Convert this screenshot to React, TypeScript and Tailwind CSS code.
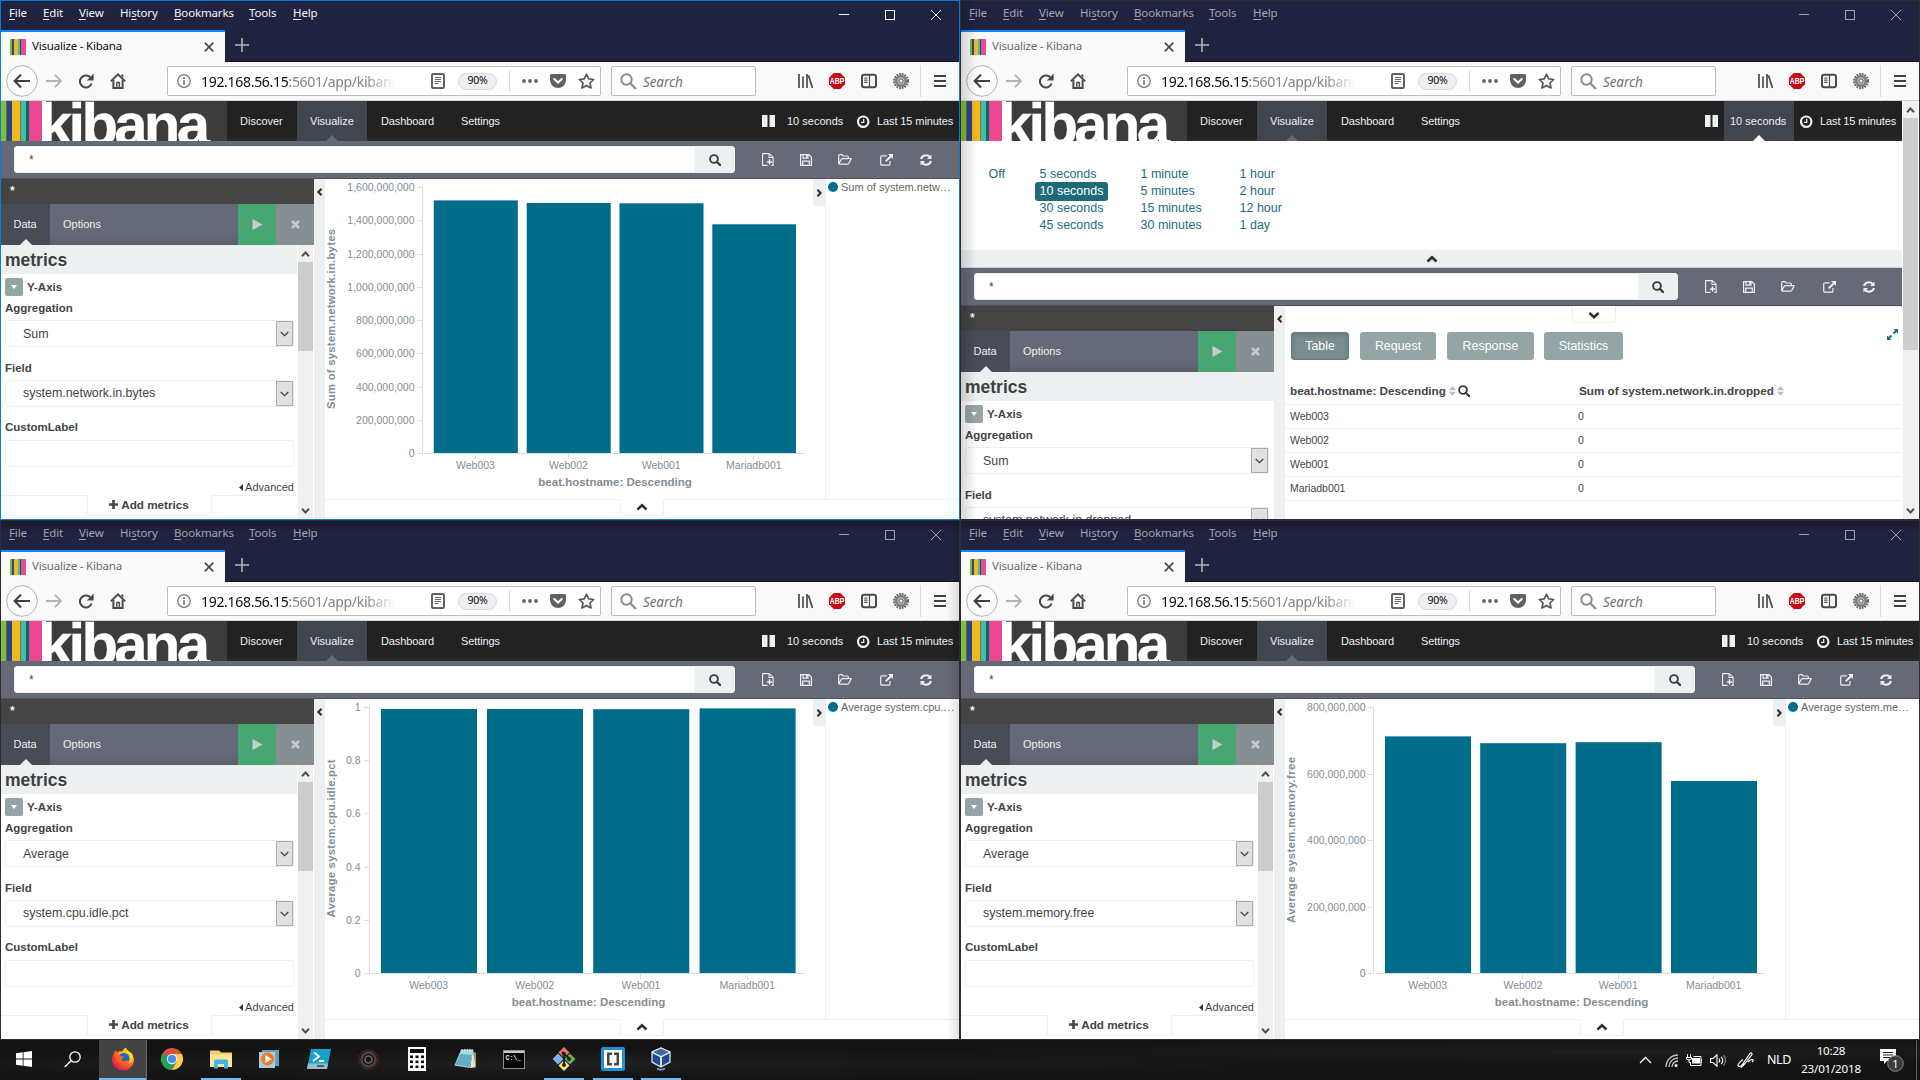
import React from 'react';

const UI = 'font-["Noto_Sans","Open_Sans",sans-serif]';

type ChartData = {
  axisX: number;
  labelRight: number;
  xStart: number;
  ticks: string[];
  yTitle: string;
  yTitleLen: number;
  yTitleMid: number;
  bars: { name: string; x1: number; x2: number; top: number }[];
  titleMid: number;
  legend: string;
};

/* ---------- browser chrome icons ---------- */

const Svg = ({ w, h, vb, children, cls = '' }: { w: number; h: number; vb?: string; children: React.ReactNode; cls?: string }) => (
  <svg width={w} height={h} viewBox={vb ?? `0 0 ${w} ${h}`} className={`block shrink-0 ${cls}`} fill="none">
    {children}
  </svg>
);

const Favicon = () => (
  <Svg w={16} h={16}>
    <rect width="2" height="16" fill="#7fb934" />
    <rect x="2" width="2" height="16" fill="#2b4590" />
    <rect x="4" width="4" height="16" fill="#f3b918" />
    <rect x="8" width="2" height="16" fill="#3ebeb0" />
    <rect x="10" width="1" height="16" fill="#17594f" />
    <rect x="11" width="5" height="16" fill="#ec4891" />
  </Svg>
);

const MenuItem = ({ w, a, u, b }: { w: string; a?: string; u: string; b: string }) => (
  <span className={w}>
    {a}
    <span className="underline underline-offset-2">{u}</span>
    {b}
  </span>
);

const TitleBar = ({ active }: { active: boolean }) => (
  <div className={`flex h-[29px] items-start bg-[#202340] pl-2 ${active ? 'text-[#f4f4f6]' : 'text-[#a2a3ab]'}`}>
    <div className={`flex h-[23px] items-center whitespace-nowrap text-[11.5px] tracking-[-0.15px] ${UI}`}>
      <MenuItem w="w-[34px]" u="F" b="ile" />
      <MenuItem w="w-[36px]" u="E" b="dit" />
      <MenuItem w="w-[41px]" u="V" b="iew" />
      <MenuItem w="w-[54px]" a="Hi" u="s" b="tory" />
      <MenuItem w="w-[75px]" u="B" b="ookmarks" />
      <MenuItem w="w-[44px]" u="T" b="ools" />
      <MenuItem w="w-[40px]" u="H" b="elp" />
    </div>
    <div className="flex-1" />
    <div className="mr-[18px] flex gap-9 pt-[9px]">
      <Svg w={10} h={10}><path d="M0 4.5h10" stroke="currentColor" /></Svg>
      <Svg w={10} h={10}><rect x=".5" y=".5" width="9" height="9" stroke="currentColor" /></Svg>
      <Svg w={10} h={10}><path d="M0 0l10 10M10 0L0 10" stroke="currentColor" /></Svg>
    </div>
  </div>
);

const TabStrip = ({ active }: { active: boolean }) => (
  <div className="flex h-8 bg-[#202340]">
    <div className="flex h-8 w-[224px] items-center border-t-2 border-[#0a84ff] bg-[#f9f9fa] pl-[9px]">
      <Favicon />
      <span className={`ml-1.5 flex-1 pb-0.5 whitespace-nowrap text-[11.5px] tracking-[-0.2px] ${UI} ${active ? 'text-[#0c0c0d]' : 'text-[#6b6b6f]'}`}>
        Visualize - Kibana
      </span>
      <Svg w={10} h={10} cls="mr-[11px]">
        <path d="M.7 .7l8.6 8.6M9.3 .7L.7 9.3" stroke="#4a4a4f" strokeWidth="1.7" />
      </Svg>
    </div>
    <div className="flex-1 border-b border-[#14152c] pt-2 pl-[10px]">
      <Svg w={14} h={14}><path d="M7 0v14M0 7h14" stroke="#b1b2bd" strokeWidth="1.6" /></Svg>
    </div>
  </div>
);

const Toolbar = () => (
  <div className="flex h-[39px] items-center border-b border-[#d5d5d7] bg-[#f9f9fa] pl-[5px]">
    <Svg w={32} h={32}>
      <circle cx="16" cy="16" r="15.3" fill="#fdfdfd" stroke="#b4b4b6" />
      <path d="M24 16H9M15 9.5L8.7 16l6.3 6.5" stroke="#3f3f42" strokeWidth="2.1" />
    </Svg>
    <Svg w={16} h={16} cls="ml-2">
      <path d="M0 8h15M9 1.8L15 8l-6 6.2" stroke="#b3b3b5" strokeWidth="1.9" />
    </Svg>
    <Svg w={16} h={16} cls="ml-4">
      <path d="M12.8 5A6 6 0 1 0 13.6 10.5" stroke="#4a4a4f" strokeWidth="2.1" />
      <path d="M15.6 .6v6.8H8.8z" fill="#4a4a4f" />
    </Svg>
    <Svg w={16} h={16} cls="ml-4">
      <path d="M.8 8.4L8 1.4l7.2 7" stroke="#4a4a4f" strokeWidth="2" />
      <path d="M11.3 1.6h2v3.5l-2-2z" fill="#4a4a4f" />
      <path d="M3.4 7v8h9.2V7" stroke="#4a4a4f" strokeWidth="2" />
      <path d="M6.8 15V9.5h2.6V15" stroke="#4a4a4f" strokeWidth="1.4" />
    </Svg>
    <div className="ml-[41px] flex h-[30px] w-[434px] items-center rounded-[2px] border border-[#bebebf] bg-white pl-[9px]">
      <Svg w={14} h={14}>
        <circle cx="7" cy="7" r="6.3" stroke="#737376" strokeWidth="1.2" />
        <path d="M7 6.2v4.6M7 3.2v1.8" stroke="#737376" strokeWidth="1.7" />
      </Svg>
      <div className={`ml-[10px] w-[196px] overflow-hidden whitespace-nowrap pt-px text-[14px] tracking-[-0.3px] text-[#0c0c0d] [mask-image:linear-gradient(to_right,black_165px,transparent_194px)] ${UI}`}>
        192.168.56.15<span className="text-[#848488]">:5601/app/kibana</span>
      </div>
      <Svg w={14} h={16} cls="ml-[34px]">
        <rect x="1" y="1" width="12" height="14" rx="1" stroke="#626266" strokeWidth="2" />
        <path d="M4 4.5h6M4 6.5h6M4 8.5h6M4 10.5h3.5" stroke="#626266" />
      </Svg>
      <div className={`ml-[13px] flex h-[17px] w-[39px] items-center justify-center rounded-full border border-[#d9d9db] bg-[#efeff1] text-[10.5px] tracking-[-0.3px] text-[#0c0c0d] ${UI}`}>
        90%
      </div>
      <div className="ml-3 h-[22px] w-px bg-[#dcdcdd]" />
      <Svg w={16} h={4} cls="ml-3">
        <circle cx="2" cy="2" r="1.9" fill="#626266" /><circle cx="8" cy="2" r="1.9" fill="#626266" /><circle cx="14" cy="2" r="1.9" fill="#626266" />
      </Svg>
      <Svg w={16} h={16} cls="ml-3">
        <path d="M1.5 1h13A1.5 1.5 0 0 1 16 2.500v4.700a8 7.800 0 0 1-16 0V2.500A1.500 1.500 0 0 1 1.500 1z" fill="#626266" />
        <path d="M4.200 5.900L8 9.500l3.800-3.600" stroke="#fff" strokeWidth="2" strokeLinecap="round" />
      </Svg>
      <Svg w={17} h={16} cls="ml-3">
        <path d="M8.500 1.200l2.200 4.700 5 .6-3.700 3.500 1 5-4.500-2.500L4 15l1-5L1.300 6.500l5-.6z" stroke="#58585c" strokeWidth="1.700" strokeLinejoin="round" />
      </Svg>
    </div>
    <div className="ml-[10px] flex h-[30px] w-[145px] items-center rounded-[2px] border border-[#bebebf] bg-white pl-2">
      <Svg w={17} h={17}>
        <circle cx="6.500" cy="6.500" r="5.200" stroke="#8d8d90" strokeWidth="2" />
        <path d="M10.500 10.500l5.500 5.500" stroke="#8d8d90" strokeWidth="2.200" />
      </Svg>
      <span className={`ml-[6px] pt-0.5 text-[13.5px] italic tracking-[-0.1px] text-[#707073] ${UI}`}>Search</span>
    </div>
    <Svg w={16} h={16} cls="ml-[41px]">
      <path d="M2 1v14M6 3.500v11.500M10 1v14M11.500 2.500L15.500 15" stroke="#4a4a4f" strokeWidth="1.700" />
    </Svg>
    <Svg w={16} h={16} cls="ml-4">
      <path d="M4.700 0h6.600L16 4.700v6.600L11.300 16H4.700L0 11.300V4.700z" fill="#c70d12" />
      <text x="8" y="11" textAnchor="middle" textLength="14.500" lengthAdjust="spacingAndGlyphs" fontSize="8.300" fontWeight="700" fill="#fff" fontFamily="Liberation Sans, sans-serif">ABP</text>
    </Svg>
    <Svg w={16} h={16} cls="ml-4">
      <rect x="1" y="1.800" width="14" height="12.400" rx="2" stroke="#4a4a4f" strokeWidth="2" />
      <path d="M8.500 2v12M3.200 5h3.300M3.200 7.200h3.300M3.200 9.400h3.300" stroke="#4a4a4f" strokeWidth="1.200" />
    </Svg>
    <Svg w={16} h={16} cls="ml-4">
      <circle cx="8" cy="8" r="7" stroke="#5f5f5f" strokeWidth="2" strokeDasharray="1.700 1.100" />
      <circle cx="8" cy="8" r="6.300" fill="#858585" />
      <circle cx="8" cy="8" r="4.300" fill="#b9b9b9" stroke="#6a6a6a" strokeWidth=".9" />
      <circle cx="8" cy="8" r="2" fill="#ececec" stroke="#5a5a5a" strokeWidth=".9" />
    </Svg>
    <div className="ml-[11px] h-8 w-px bg-[#dcdcdd]" />
    <Svg w={12} h={12} cls="ml-[13px]">
      <path d="M0 1h12M0 6h12M0 11h12" stroke="#3f3f42" strokeWidth="2" />
    </Svg>
  </div>
);

/* ---------- kibana parts ---------- */

const Caret = ({ dir, cls = '', small = false }: { dir: 'up' | 'down' | 'left' | 'right'; cls?: string; small?: boolean }) => {
  const d = { up: 'M1.500 7.500L6 3.300 10.500 7.500', down: 'M1.500 3L6 7.200 10.500 3', left: 'M8 1L4 5l4 4', right: 'M4 1l4 4-4 4' }[dir];
  return <Svg w={small ? 10 : 12} h={small ? 8 : 10} vb="0 0 12 10" cls={cls}><path d={d} stroke="#2e3033" strokeWidth="2.600" /></Svg>;
};

const ScrollArrow = ({ up = false }: { up?: boolean }) => (
  <Svg w={9} h={6}>
    <path d={up ? 'M1 5.200l3.500-3.700L8 5.200' : 'M1 .8l3.500 3.700L8 .8'} stroke="#505050" strokeWidth="2" />
  </Svg>
);

const ScrollBar = ({ thumb }: { thumb: string }) => (
  <div className="flex w-[17px] shrink-0 flex-col items-center border-x border-white bg-[#f0f0f0]">
    <div className="flex h-[17px] shrink-0 items-center"><ScrollArrow up /></div>
    <div className={`w-full shrink-0 bg-[#cdcdcd] ${thumb}`} />
    <div className="flex-1" />
    <div className="flex h-4 items-center"><ScrollArrow /></div>
  </div>
);

const Logo = () => (
  <div className="flex h-10 w-[226px] overflow-hidden bg-[#3c3c3c]">
    <svg width="226" height="40" viewBox="0 0 226 40" className="block">
      <rect width="5" height="40" fill="#83bd3c" />
      <rect x="5" width="1" height="40" fill="#55762f" />
      <rect x="6" width="5" height="40" fill="#2b4590" />
      <rect x="11" width="8" height="40" fill="#f3b918" />
      <rect x="19" width="1" height="40" fill="#8a7a3a" />
      <rect x="20" width="5" height="40" fill="#3ebeb0" />
      <rect x="25" width="3" height="40" fill="#12645a" />
      <rect x="28" width="13" height="40" fill="#ec4891" />
      <rect x="41" width="4" height="40" fill="#fff" />
      <text x="38" y="43.500" fontSize="60" fontWeight="700" fill="#fff" fontFamily="Liberation Sans, Arial, sans-serif" textLength="171" lengthAdjust="spacing" stroke="#fff" strokeWidth=".3">kibana</text>
    </svg>
  </div>
);

const Pointer = ({ cls }: { cls: string }) => (
  <svg width="12" height="6" viewBox="0 0 12 6" className={`absolute bottom-0 left-1/2 -ml-1.5 ${cls}`}><path d="M0 6l6-6 6 6z" fill="currentColor" /></svg>
);

const KibanaNav = ({ open }: { open: boolean }) => (
  <div className="flex h-10 items-center bg-[#222222] bg-linear-to-b from-[#222] from-80% to-[#292929] text-[11px] text-[#ecf0f1]">
    <Logo />
    <span className="w-[70px] pl-[13px]">Discover</span>
    <span className="relative flex h-10 w-[70px] items-center bg-[#41454e] pl-[13px]">
      Visualize
      <Pointer cls="text-[#656a76]" />
    </span>
    <span className="w-[80px] pl-[14px] tracking-[-0.1px]">Dashboard</span>
    <span className="pl-[14px] tracking-[-0.1px]">Settings</span>
    <div className="flex-1" />
    <Svg w={13} h={12} cls="mr-1.5"><path d="M0 0h5.500v12H0zM7.500 0H13v12H7.500z" fill="#ecf0f1" /></Svg>
    <span className={`relative flex h-10 w-[70px] items-center pl-[6px] whitespace-nowrap ${open ? 'bg-[#41454e]' : ''}`}>
      10 seconds
      {open && <Pointer cls="text-white" />}
    </span>
    <Svg w={13} h={13} cls="mr-[7px] ml-[6px]">
      <circle cx="6.200" cy="6.700" r="5.200" stroke="#ecf0f1" strokeWidth="2.200" />
      <path d="M6.700 3.700v3.700H4" stroke="#ecf0f1" strokeWidth="1.300" />
    </Svg>
    <span className="w-[82px] whitespace-nowrap tracking-[-0.1px]">Last 15 minutes</span>
  </div>
);

const Magnifier = ({ s = 12 }: { s?: number }) => (
  <Svg w={s} h={s} vb="0 0 12 12">
    <circle cx="5" cy="5" r="3.900" stroke="#3b3e42" strokeWidth="1.900" />
    <path d="M7.800 7.800l3.300 3.300" stroke="#3b3e42" strokeWidth="2.200" strokeLinecap="round" />
  </Svg>
);

const SearchRow = () => (
  <div className="flex h-[38px] items-center border-b border-[#50505f] bg-[#656a76] pl-[13px] text-[#ecf0f1]">
    <div className="mb-px flex h-[27px] flex-1 overflow-hidden rounded-[3px] border border-[#eef1f2] bg-white">
      <span className="flex-1 pt-1 pl-[14px] text-[12px] leading-[18px] text-[#444]">*</span>
      <div className="flex w-[39px] items-center justify-center bg-[#ecf0f1] pt-px pl-px"><Magnifier /></div>
    </div>
    <div className="flex w-[224px] items-center pl-[27px]">
      <Svg w={12} h={13}>
        <path d="M5.500 12.400H.6V.6h6.500l4 3.600v8.200H9.500M7 .8v3.700h4" stroke="currentColor" strokeWidth="1.100" />
        <path d="M7.500 6.300v5.200M4.900 8.900h5.200" stroke="currentColor" strokeWidth="1.500" />
      </Svg>
      <Svg w={12} h={12} cls="ml-[25.500px]">
        <path d="M.6 .6h8.200l2.600 2.600v8.200H.6zM3 .8v3.400h5V.8M2.700 11.300V7.200h6.600v4.100" stroke="currentColor" strokeWidth="1.200" />
        <path d="M6 1h1.500v2.500H6z" fill="currentColor" />
      </Svg>
      <Svg w={14} h={11} cls="ml-[26.500px]">
        <path d="M.7 9.400V1.600q0-1 1-1h2.400l1 1.400h4.200q1 0 1 1v1.500M.8 9.600l2.500-4.300q.4-.7 1.300-.7h8.600l-2.400 4.600q-.5.900-1.400.9H1z" stroke="currentColor" strokeWidth="1.200" strokeLinejoin="round" />
      </Svg>
      <Svg w={13} h={12} cls="ml-[27.500px]">
        <path d="M6.700 1.800H2q-1.300 0-1.300 1.300v6.700Q.7 11.200 2 11.200h6.700q1.300 0 1.300-1.300V7" stroke="currentColor" strokeWidth="1.200" />
        <path d="M8 0h5v5l-1.700-1.700-5 4.700-1.300-1.300 4.800-5z" fill="currentColor" />
      </Svg>
      <Svg w={12} h={12} cls="ml-[27.500px]">
        <path d="M1 5A5 4.800 0 0 1 9.700 3M11 7A5 4.800 0 0 1 2.300 9" stroke="currentColor" strokeWidth="2.100" />
        <path d="M11.500 .6v4.500H7zM.5 11.400V6.900H5z" fill="currentColor" />
      </Svg>
    </div>
  </div>
);

const Select = ({ value, nudge = '' }: { value: string; nudge?: string }) => (
  <div className="flex h-[27px] items-center rounded-[3px] border border-[#ecf0f1] pl-[17px] text-[12.4px] text-[#444]">
    <span className={`flex-1 whitespace-nowrap ${nudge}`}>{value}</span>
    <div className="flex h-[25px] w-[17px] items-center justify-center border border-[#adadad] bg-[#e1e1e1]">
      <Svg w={9} h={6}><path d="M.7 1l3.800 3.700L8.300 1" stroke="#404040" strokeWidth="1.200" /></Svg>
    </div>
  </div>
);

const Label = ({ nudge = 'pt-0.5', children }: { nudge?: string; children: React.ReactNode }) => (
  <div className={`flex h-6 items-center text-[11.5px] font-bold text-[#444] ${nudge}`}>{children}</div>
);

const Sidebar = ({ agg, field, scroll }: { agg: string; field: string; scroll: boolean }) => (
  <div className="flex w-[313px] shrink-0 flex-col">
    <div className="h-[25px] shrink-0 bg-[#444444] pt-0.5 pl-[9px] text-[12px] font-bold leading-[20px] text-[#ecf0f1]">*</div>
    <div className="flex h-[41px] shrink-0 items-stretch bg-[#666a78] bg-linear-to-b from-[#666a78] from-70% to-[#5b5e6a] text-[11px] text-[#ecf0f1]">
      <div className="relative flex w-[49px] items-center bg-[#484c56] pb-px pl-[12.500px]">
        Data
        <Pointer cls="text-[#ecf0f1]" />
      </div>
      <div className="flex flex-1 items-center pb-px pl-[13px]">Options</div>
      <div className="flex w-[38px] items-center justify-center bg-[#46a571] pl-px">
        <Svg w={11} h={11}><path d="M.5 0l10 5.500-10 5.500z" fill="#c5cfcd" /></Svg>
      </div>
      <div className="flex w-[38px] items-center justify-center bg-[#858e93] pl-px">
        <Svg w={9} h={9}><path d="M1 1l7 7M8 1L1 8" stroke="#c3c8cb" strokeWidth="2.800" /></Svg>
      </div>
    </div>
    <div className="flex min-h-0 flex-1 overflow-hidden">
      <div className="flex flex-1 flex-col">
        <div className="flex h-[29px] shrink-0 items-center bg-[#ecf0f1] pt-0.5 pl-1 text-[17.5px] font-bold text-[#3f3f3f]">metrics</div>
        <div className={`flex flex-1 shrink-0 flex-col pt-1 pl-1 ${scroll ? 'pr-[3px]' : 'pr-[5px]'}`}>
          <div className="flex h-[18px] shrink-0 items-center text-[11.5px] font-bold text-[#444]">
            <div className="mr-1 flex size-[18px] items-center justify-center rounded-[2px] bg-[#95a5a6]">
              <Svg w={6} h={4}><path d="M0 0h6L3 4z" fill="#fff" /></Svg>
            </div>
            <span className="pt-px">Y-Axis</span>
          </div>
          <Label>Aggregation</Label>
          <Select value={agg} nudge="pt-px" />
          <div className="mt-[9px]"><Label>Field</Label></div>
          <Select value={field} />
          {scroll && (
            <>
              <div className="mt-[9px]"><Label nudge="">CustomLabel</Label></div>
              <div className="h-[27px] rounded-[3px] border border-[#ecf0f1]" />
              <div className="mt-3 flex h-4 items-center justify-end gap-0.5 text-[11px] text-[#444]">
                <Svg w={4} h={7}><path d="M4 0v7L0 3.500z" fill="#333" /></Svg>
                Advanced
              </div>
            </>
          )}
        </div>
        {scroll && (
          <div className="flex h-6 shrink-0">
            <div className="w-[86px] border-t border-[#ecf0f1]" />
            <div className="mb-[3px] flex w-[125px] items-center justify-center gap-[3px] rounded-b-[3px] border border-t-0 border-[#ecf0f1] pr-px pb-px text-[11.7px] font-bold whitespace-nowrap text-[#444]">
              <Svg w={9} h={9}><path d="M4.500 0v9M0 4.500h9" stroke="#444" strokeWidth="2.600" /></Svg>
              Add metrics
            </div>
            <div className="flex-1 border-t border-[#ecf0f1]" />
          </div>
        )}
      </div>
      {scroll && <ScrollBar thumb="h-[89px]" />}
    </div>
  </div>
);

const Gutter = () => (
  <div className="flex w-[11px] shrink-0 justify-center bg-[#ecf0f1] pt-[9px]"><Caret dir="left" small /></div>
);

const Chart = ({ c }: { c: ChartData }) => {
  const y0 = 453.5;
  const yTop = 187.5;
  const step = (y0 - yTop) / (c.ticks.length - 1);
  return (
    <svg width="488" height="320" viewBox="325 179 488 320" className="block shrink-0" fontFamily="Liberation Sans, Arial, sans-serif">
      <g stroke="#dddddd" fill="none">
        <path d={`M${c.axisX} ${yTop}V${y0}`} />
        <path d={`M${c.xStart} ${y0}H805`} />
        {c.ticks.map((t, i) => <path key={t} d={`M${c.axisX - 5.5} ${Math.floor(y0 - i * step) + 0.5}h6`} />)}
      </g>
      <g fill="#848e96" fontSize="10.5">
        {c.ticks.map((t, i) => <text key={t} x={c.labelRight} y={y0 + 3.5 - i * step} textAnchor="end">{t}</text>)}
        {c.bars.map((b) => (
          <g key={b.name}>
            <path d={`M${Math.floor((b.x1 + b.x2) / 2 - 0.5) + 0.5} ${y0}v5.500`} stroke="#dddddd" />
            <text x={(b.x1 + b.x2) / 2 - 0.3} y="469" textAnchor="middle">{b.name}</text>
          </g>
        ))}
      </g>
      {c.bars.map((b) => <rect key={b.name} x={b.x1} y={b.top} width={b.x2 - b.x1} height={y0 - 0.5 - b.top} fill="#006e8a" />)}
      <g fill="#848e96" fontWeight="700" fontSize="11.5">
        <text x={c.titleMid} y="486" textAnchor="middle">beat.hostname: Descending</text>
        <text transform={`translate(335 ${c.yTitleMid}) rotate(-90)`} textAnchor="middle" fontSize="11.300" textLength={c.yTitleLen}>{c.yTitle}</text>
      </g>
    </svg>
  );
};

const ChartPane = ({ c }: { c: ChartData }) => (
  <div className="flex flex-1 flex-col bg-white">
    <div className="flex h-80">
      <Chart c={c} />
      <div className="flex h-[27px] w-3 items-center justify-center rounded-bl-[3px] bg-[#ecf0f1] pr-px"><Caret dir="right" small /></div>
      <div className="flex flex-1 items-start border-l border-[#ecf0f1] pt-[1px] pl-[2px] text-[11px] whitespace-nowrap text-[#666]">
        <Svg w={10} h={10} cls="mt-[2px] mr-[3px]"><circle cx="5" cy="5" r="5" fill="#006e8a" /></Svg>
        <span className="leading-[15px]">{c.legend}<span className="tracking-[0.7px]">...</span></span>
      </div>
    </div>
    <div className="flex h-5">
      <div className="w-[295px] border-t border-[#ecf0f1]" />
      <div className="flex h-[17px] w-11 items-center justify-center rounded-b-[3px] border border-t-0 border-[#ecf0f1]"><Caret dir="up" /></div>
      <div className="flex-1 border-t border-[#ecf0f1]" />
    </div>
  </div>
);

const Sort = () => (
  <Svg w={7} h={10} cls="ml-[3px]"><path d="M0 4.300L3.500 .3 7 4.300zM0 5.700h7L3.500 9.700z" fill="#b7bdc1" /></Svg>
);

const TablePane = () => (
  <div className="flex flex-1 flex-col overflow-hidden bg-white">
    <div className="flex h-[17px] shrink-0">
      <div className="flex-1 border-t border-[#ecf0f1]" />
      <div className="flex w-11 items-center justify-center rounded-b-[3px] border border-t-0 border-[#ecf0f1] pt-px"><Caret dir="down" /></div>
      <div className="flex-1 border-t border-[#ecf0f1]" />
    </div>
    <div className="flex h-[63px] shrink-0 items-start pt-[9px] pl-1.5 text-[12.400px] text-white">
      <div className="flex h-7 w-[58px] items-center justify-center rounded-[3px] border border-[#6b7d7d] bg-[#798d8f] shadow-[inset_0_2px_4px_rgba(0,0,0,0.18)]">Table</div>
      <div className="ml-[11px] flex h-7 w-[76px] items-center justify-center rounded-[3px] bg-[#95a5a6]">Request</div>
      <div className="ml-[11px] flex h-7 w-[87px] items-center justify-center rounded-[3px] bg-[#95a5a6]">Response</div>
      <div className="ml-[10px] flex h-7 w-[79px] items-center justify-center rounded-[3px] bg-[#95a5a6]">Statistics</div>
      <div className="flex-1" />
      <Svg w={11} h={11} cls="mt-[-3px] mr-1">
        <path d="M6.500 0H11v4.500L9.500 3 7.300 5.200 5.800 3.700 8 1.500zM4.500 11H0V6.500L1.500 8l2.200-2.200 1.500 1.500L3 9.500z" fill="#1d6d82" />
      </Svg>
    </div>
    <div className="flex h-[19px] shrink-0 items-start border-b border-[#ecf0f1] pl-[5px] text-[11.700px] leading-[8px] font-bold whitespace-nowrap text-[#444]">
      <div className="flex h-[9px] w-[289px] items-center">beat.hostname: Descending<Sort /><span className="ml-0.5"><Magnifier /></span></div>
      <div className="flex h-[9px] items-center">Sum of system.network.in.dropped<Sort /></div>
    </div>
    {['Web003', 'Web002', 'Web001', 'Mariadb001'].map((h) => (
      <div key={h} className="flex h-6 shrink-0 items-center border-b border-[#ecf0f1] pt-px pl-[5px] text-[10.500px] text-[#444]">
        <span className="w-[288px]">{h}</span>
        <span>0</span>
      </div>
    ))}
  </div>
);

const intervals: { w: string; items: string[] }[] = [
  { w: 'w-[51px]', items: ['Off'] },
  { w: 'w-[101px]', items: ['5 seconds', '10 seconds', '30 seconds', '45 seconds'] },
  { w: 'w-[99px]', items: ['1 minute', '5 minutes', '15 minutes', '30 minutes'] },
  { w: 'w-[90px]', items: ['1 hour', '2 hour', '12 hour', '1 day'] },
];

const IntervalPicker = () => (
  <div className="flex shrink-0 flex-col bg-white">
    <div className="flex h-[109px] pt-[25px] pl-[23px] text-[12.500px] text-[#1d6d82]">
      {intervals.map((col) => (
        <div key={col.w} className={`flex flex-col items-start ${col.w}`}>
          {col.items.map((t) => (
            <span
              key={t}
              className={`-mt-px mb-[-1.200px] flex h-[19px] items-center rounded-[3px] px-[4.500px] whitespace-nowrap ${t === '10 seconds' ? 'bg-[#1f6b7a] text-white' : ''}`}
            >
              {t}
            </span>
          ))}
        </div>
      ))}
    </div>
    <div className="flex h-[18px] items-center justify-center border-b border-[#cfd4d6] bg-[#ecf0f1]"><Caret dir="up" /></div>
  </div>
);

/* ---------- windows ---------- */

type WinProps = { active?: boolean; agg: string; field: string; chart?: ChartData; shade?: React.ReactNode };

const BrowserWindow = ({ active = false, agg, field, chart, shade }: WinProps) => (
  <div className={`relative flex h-[520px] w-[960px] flex-col overflow-hidden border bg-white ${active ? 'border-[#0f7bd6]' : 'border-[#2d2d30]'}`}>
    <TitleBar active={active} />
    <TabStrip active={active} />
    <Toolbar />
    <div className="flex min-h-0 flex-1">
      <div className="flex min-w-0 flex-1 flex-col overflow-hidden">
        <KibanaNav open={!chart} />
        {!chart && <IntervalPicker />}
        <SearchRow />
        <div className="flex min-h-0 flex-1">
          <Sidebar agg={agg} field={field} scroll={!!chart} />
          <Gutter />
          {chart ? <ChartPane c={chart} /> : <TablePane />}
        </div>
      </div>
      {!chart && <ScrollBar thumb="h-[232px]" />}
    </div>
    {shade}
  </div>
);

const names = ['Web003', 'Web002', 'Web001', 'Mariadb001'];
const mk = (v: number[][]) => v.map(([x1, x2, top], i) => ({ name: names[i], x1, x2, top }));

const networkChart: ChartData = {
  axisX: 422.5, labelRight: 414.5, xStart: 425,
  ticks: ['0', '200,000,000', '400,000,000', '600,000,000', '800,000,000', '1,000,000,000', '1,200,000,000', '1,400,000,000', '1,600,000,000'],
  yTitle: 'Sum of system.network.in.bytes', yTitleLen: 180, yTitleMid: 319,
  bars: mk([[433.8, 517.8, 200.4], [526.7, 610.7, 203], [619.5, 703.5, 203.3], [712.3, 796, 224.3]]),
  titleMid: 615, legend: 'Sum of system.netw',
};
const cpuChart: ChartData = {
  axisX: 369.5, labelRight: 360.5, xStart: 371,
  ticks: ['0', '0.2', '0.4', '0.6', '0.8', '1'],
  yTitle: 'Average system.cpu.idle.pct', yTitleLen: 158, yTitleMid: 318.5,
  bars: mk([[381, 477, 189], [487, 583, 189], [593.2, 689.3, 189.2], [699.6, 795.6, 188.4]]),
  titleMid: 588.5, legend: 'Average system.cpu.',
};
const memoryChart: ChartData = {
  axisX: 413.5, labelRight: 405.5, xStart: 416,
  ticks: ['0', '200,000,000', '400,000,000', '600,000,000', '800,000,000'],
  yTitle: 'Average system.memory.free', yTitleLen: 166, yTitleMid: 320,
  bars: mk([[425, 511, 216.4], [520.2, 606.2, 223.2], [615.6, 701.6, 222.2], [711, 797, 261]]),
  titleMid: 611.5, legend: 'Average system.me',
};

/* ---------- taskbar ---------- */

const Task = ({ w, bar, on, children }: { w: string; bar?: string; on?: boolean; children: React.ReactNode }) => (
  <div className={`flex h-10 flex-col items-center ${w} ${on ? 'border-r border-[#6a6a6a] bg-[#434343]' : ''}`}>
    <div className="flex flex-1 items-center">{children}</div>
    <div className={`h-0.5 ${bar ?? ''}`} />
  </div>
);

const Taskbar = () => (
  <div className="flex h-10 w-full items-center overflow-hidden bg-[#131313] bg-[radial-gradient(ellipse_at_30%_60%,#202020_0%,transparent_40%),radial-gradient(ellipse_at_85%_30%,#1e1e1e_0%,transparent_30%)]">
    <Task w="w-[48px]">
      <Svg w={16} h={16}><path d="M0 2.300L6.700 1.300v6.200H0zM7.500 1.200L16 0v7.500H7.500zM0 8.400h6.700v6.300L0 13.700zM7.500 8.400H16V16l-8.500-1.200z" fill="#fff" /></Svg>
    </Task>
    <Task w="w-[51px]">
      <Svg w={17} h={17} cls="mr-[3px]"><circle cx="11" cy="6" r="5.200" stroke="#fff" strokeWidth="1.300" /><path d="M7.200 9.800L.7 16" stroke="#fff" strokeWidth="1.400" /></Svg>
    </Task>
    <Task w="w-[48px]" on bar="bg-[#76b9ed] w-[47px]">
      <Svg w={24} h={24}>
        <defs>
          <radialGradient id="ffx" cx=".75" cy=".2" r=".9"><stop offset="0" stopColor="#ffe226" /><stop offset=".45" stopColor="#ff9a1e" /><stop offset=".75" stopColor="#f4402f" /><stop offset="1" stopColor="#d9156c" /></radialGradient>
        </defs>
        <path d="M3 6l1.500-3L6 5.500C8 4 10 4 11 4.500 12 2 14 1 15 .5c0 2 1 3 3.500 4.500C21 7 23 10 23 13c0 6-5 10.500-11 10.500S1 19 1 13c0-3 .8-5 2-7z" fill="url(#ffx)" />
        <circle cx="13" cy="11.500" r="5.500" fill="#1f66c9" />
        <path d="M5 9c2-1.500 4-1 5 0l3 .5c0 1.500-2 2-2.500 2.500 0 2 2.500 3 5 1.500 1.500-.5 2.500 0 2.500.8-2 3.700-8 4.200-11 .7C5.500 13 5 11 5 9z" fill="#f8671f" />
        <path d="M15 1c-1 3 3 4.500 3.500 9 1.500 2 .5 5-1 7 3.500-1.500 5-4.500 4.500-8.500C21 5 16 4 15 1z" fill="#ffd521" />
      </Svg>
    </Task>
    <Task w="w-[50px]">
      <Svg w={22} h={22}>
        <circle cx="11" cy="11" r="11" fill="#dd4f43" />
        <path d="M11 11L1.400 5.600A11 11 0 0 0 10.500 22l5-8.500z" fill="#1da362" />
        <path d="M11 22a11 11 0 0 0 9.700-16H11l4.700 8z" fill="#ffcd46" />
        <circle cx="11" cy="11" r="5.200" fill="#f1f1f1" /><circle cx="11" cy="11" r="4.100" fill="#4a8af4" />
      </Svg>
    </Task>
    <Task w="w-[48px]" bar="bg-[#76b9ed] w-10">
      <Svg w={22} h={20}>
        <path d="M0 1.500h9l2 2h11V18H0z" fill="#f5cf63" /><path d="M0 5.500h22V18H0z" fill="#ffe499" />
        <path d="M4 19.500V12q0-1.500 1.500-1.500h11q1.500 0 1.500 1.500v7.500h-4V15H8v4.500z" fill="#3eb4e8" />
      </Svg>
    </Task>
    <Task w="w-[48px]">
      <Svg w={20} h={20}>
        <rect x="3" y="1" width="17" height="16" fill="#6a9dbd" /><rect x="0" y="3" width="16" height="16" fill="#a8cde2" />
        <circle cx="8.500" cy="10" r="6.500" fill="#f27a24" /><path d="M6.300 6v8l6.500-4z" fill="#fff" />
      </Svg>
    </Task>
    <Task w="w-[51px]">
      <Svg w={24} h={20}>
        <path d="M4 0h20l-4 20H0z" fill="#17a2cd" /><path d="M1 14.500h20.100L20 20H0z" fill="#9bbac6" />
        <path d="M7 3.500l5 4-6 4.500M12 12h5" stroke="#fff" strokeWidth="1.800" /><path d="M10 17h7" stroke="#304a55" strokeWidth="1.500" />
      </Svg>
    </Task>
    <Task w="w-[48px]">
      <Svg w={21} h={21}>
        <circle cx="10.500" cy="10.500" r="9.500" stroke="#7c2225" strokeWidth="1.200" strokeDasharray="1.500 1.200" />
        <circle cx="10.500" cy="10.500" r="7" stroke="#4b4242" strokeWidth="2.500" /><circle cx="10.500" cy="10.500" r="3.500" stroke="#706565" strokeWidth="1.500" />
      </Svg>
    </Task>
    <Task w="w-[49px]">
      <Svg w={18} h={24}>
        <path d="M0 0h18v24H0z" fill="#fff" /><path d="M2 2h14v4H2z" fill="#111" />
        {[8, 13, 18].map((y) => [2, 7.500, 13].map((x) => <rect key={`${x}-${y}`} x={x} y={y + 0.500} width="3" height="2.600" fill="#111" />))}
      </Svg>
    </Task>
    <Task w="w-[48px]">
      <Svg w={22} h={21}>
        <path d="M19.500 2.500L22 4v14.500l-4 .5z" fill="#a8925c" />
        <path d="M7 .8h12.500L15.500 19 .5 16.500z" fill="#a5dbe6" />
        <path d="M6.500 5L1.500 15.500l13.500 2.500L18 6z" fill="#5fb0c2" />
        <path d="M19 1l2.300 16.500-5.300 1.700z" fill="#d9e8ea" />
        <path d="M7.500 1h11" stroke="#e8f3f5" strokeWidth="1.500" strokeDasharray="1.500 1" />
      </Svg>
    </Task>
    <Task w="w-[50px]">
      <Svg w={22} h={19}>
        <rect x=".5" y=".5" width="21" height="18" fill="#050505" stroke="#8d8d8d" /><path d="M1 1h20v2H1z" fill="#c4c9d4" />
        <text x="2.500" y="9.500" fontSize="6.500" fontWeight="700" fill="#eee" fontFamily="Liberation Mono, monospace">C:\_</text>
      </Svg>
    </Task>
    <Task w="w-[49px]" bar="bg-[#76b9ed] w-10">
      <Svg w={24} h={24}>
        <path d="M12 0l5.500 5.500L12 11 6.500 5.500z" fill="#f0716f" /><path d="M6 6.500l5.500 5.500L6 17.500.5 12z" fill="#7fb2f5" />
        <path d="M18 6.500l5.500 5.500-5.500 5.500-5.500-5.500z" fill="#6cab4c" /><path d="M12 13l5.500 5.500L12 24l-5.500-5.500z" fill="#f7df76" />
        <path d="M12 6v13M10 5l8 7" stroke="#24201c" strokeWidth="1.900" /><circle cx="12" cy="18" r="2" fill="#24201c" /><circle cx="17" cy="12" r="2" fill="#24201c" /><circle cx="12" cy="7" r="2" fill="#24201c" />
      </Svg>
    </Task>
    <Task w="w-[49px]" bar="bg-[#76b9ed] w-10">
      <Svg w={24} h={24}>
        <rect width="24" height="24" rx="2" fill="#1c92d4" /><rect x="3" y="3" width="18" height="18" fill="#fff" />
        <path d="M11 5.500H6v13h5V16H8.500V8H11zM13 5.500h5v13h-5V16h2.500V8H13z" fill="#464646" />
      </Svg>
    </Task>
    <Task w="w-[48px]" bar="bg-[#76b9ed] w-10">
      <Svg w={20} h={24}>
        <path d="M10 1l9 4v10l-9 5-9-5V5z" fill="#1e4d87" stroke="#d7e1ee" strokeWidth="1.300" />
        <path d="M1 5l9 4.500L19 5M10 9.500V20" stroke="#f2f5f9" strokeWidth="1.700" /><path d="M10 1l9 4-9 4.500L1 5z" fill="#3c6ba4" stroke="#e6ecf4" /><path d="M6 21.500q4 2.500 8 0" stroke="#7d92b4" strokeWidth="2" />
      </Svg>
    </Task>
    <div className="flex-1" />
    <Svg w={13} h={8} cls="mr-[13px]"><path d="M1 7l5.500-5.500L12 7" stroke="#fff" strokeWidth="1.300" /></Svg>
    <Svg w={13} h={13} cls="mr-2">
      <path d="M1 13A12 12 0 0 1 13 1M4 13a9 9 0 0 1 9-9M7 13a6 6 0 0 1 6-6" stroke="#c9c9c9" strokeWidth="1.300" />
      <circle cx="11" cy="11.500" r="1.500" fill="#fff" />
    </Svg>
    <Svg w={16} h={12} cls="mr-2">
      <path d="M6 4h8v5.500H6z" fill="#fff" /><path d="M4.500 8v3.500h10.500V2.500H7.500M15.700 5v4" stroke="#fff" /><path d="M1.500 0v3M4.500 0v3M.5 3.500h5v1.500q-2.500 2-5 0zM3 5.500v3h1.500" stroke="#fff" />
    </Svg>
    <Svg w={17} h={13} cls="mr-[10px]">
      <path d="M.6 4.500H3L7 .8v11.400L3 8.500H.6z" stroke="#fff" strokeWidth="1.100" />
      <path d="M9 4.500q1.500 2 0 4M11.200 2.800q3 3.700 0 7.400" stroke="#fff" strokeWidth="1.100" /><path d="M13.500 1.200q4 5.300 0 10.600" stroke="#888" strokeWidth="1.100" />
    </Svg>
    <Svg w={17} h={16} cls="mr-[13px]">
      <path d="M5 13L13 1.500q2-1.500 2 1L7.500 12zM5 13l-.5 2 3-3M1 12.500q2-3 5-5M1 12.500q-.5 2.500 3 1.500M11 10q3-3 4.500-2.500t-.500 2.500" stroke="#fff" strokeWidth="1.200" />
    </Svg>
    <span className={`w-[34px] text-[12.500px] tracking-[-0.4px] text-white ${UI}`}>NLD</span>
    <div className={`flex w-[60px] flex-col items-center text-[11.600px] leading-[18px] tracking-[-0.2px] whitespace-nowrap text-white ${UI}`}>
      <span>10:28</span>
      <span>23/01/2018</span>
    </div>
    <Svg w={25} h={24} cls="mr-[11px] ml-[19px]">
      <path d="M0 1h16v12H7l-3 3v-3H0z" fill="#fff" /><path d="M3 4.500h10M3 7h10M3 9.500h7" stroke="#222" />
      <circle cx="15.500" cy="15.500" r="7.800" fill="#3a3a3a" stroke="#8c8c8c" />
      <text x="15.500" y="19.500" textAnchor="middle" fontSize="11" fill="#fff" fontFamily="Noto Sans, sans-serif">1</text>
    </Svg>
    <div className="mr-[3px] h-10 w-px bg-[#5d5d5d]" />
  </div>
);

const TopShade = () => <div className="pointer-events-none absolute inset-x-0 top-0 h-3 bg-linear-to-b from-black/25 to-transparent" />;

export default function App() {
  return (
    <div className='flex h-[1080px] w-[1920px] flex-col overflow-hidden bg-[#111] font-["Liberation_Sans",Arial,sans-serif]'>
      <div className="grid grid-cols-[960px_960px] grid-rows-[520px_520px]">
        <BrowserWindow active agg="Sum" field="system.network.in.bytes" chart={networkChart} />
        <BrowserWindow
          agg="Sum"
          field="system.network.in.dropped"
          shade={<div className="pointer-events-none absolute inset-y-0 left-0 w-4 bg-linear-to-r from-black/15 to-transparent" />}
        />
        <BrowserWindow
          agg="Average"
          field="system.cpu.idle.pct"
          chart={cpuChart}
          shade={<><TopShade /><div className="pointer-events-none absolute inset-y-0 right-0 w-3 bg-linear-to-l from-black/12 to-transparent" /></>}
        />
        <BrowserWindow agg="Average" field="system.memory.free" chart={memoryChart} shade={<TopShade />} />
      </div>
      <Taskbar />
    </div>
  );
}
